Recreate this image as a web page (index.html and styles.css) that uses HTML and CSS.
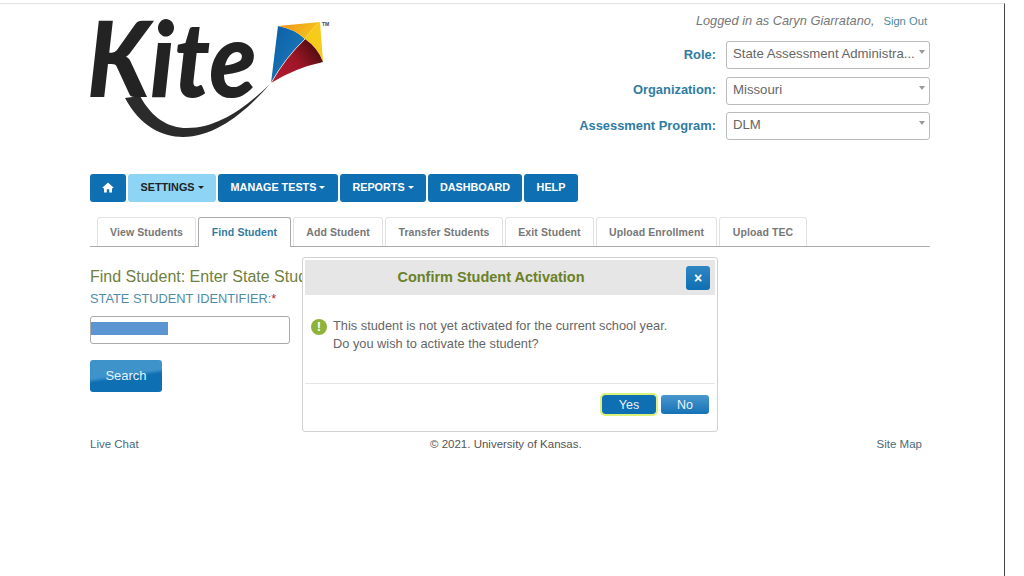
FILE: index.html
```html
<!DOCTYPE html>
<html lang="en">
<head>
    <meta charset="UTF-8">
    <title>Find Student</title>
    <link rel="stylesheet" href="styles.css">
</head>
<body>
    <div class="screen">
        <div class="page">
            <header class="header">
                <div class="logo">
                    <svg width="245" height="125" viewBox="0 0 245 125" role="img" aria-label="Kite logo">
                        <defs>
                            <linearGradient id="kite-red" x1="0" y1="1" x2="1" y2="0.4">
                                <stop offset="0" stop-color="#b81c30"/>
                                <stop offset="0.6" stop-color="#9c1526"/>
                                <stop offset="1" stop-color="#4f0d10"/>
                            </linearGradient>
                            <linearGradient id="kite-sun" x1="0" y1="0" x2="1" y2="0.3">
                                <stop offset="0" stop-color="#ee8f1c"/>
                                <stop offset="1" stop-color="#f7c41a"/>
                            </linearGradient>
                            <linearGradient id="kite-blue" x1="0" y1="0" x2="1" y2="1">
                                <stop offset="0" stop-color="#0a5ea6"/>
                                <stop offset="1" stop-color="#2080bd"/>
                            </linearGradient>
                        </defs>
                        <path class="swoosh" d="M35 80C50 108 72 119 93 119C125 119 155 95 180 66C155 90 128 110 97 110C78 110 62 100 50 78Z"/>
                        <path d="M188 8Q205 11 215 21Q195 40 181 65Z" fill="url(#kite-blue)"/>
                        <path d="M188 8L230 4Q222 10 215 21Q205 11 188 8Z" fill="url(#kite-sun)"/>
                        <path d="M230 4L233 44Q228 30 215 21Q222 10 230 4Z" fill="#f6cb1a"/>
                        <path d="M181 65Q195 40 215 21Q228 30 233 44Q205 50 181 65Z" fill="url(#kite-red)"/>
                        <path d="M181 65Q195 40 215 21" fill="none" stroke="#ececec" stroke-width="0.8"/>
                    </svg>
                    <span class="logo-word">Kite</span>
                    <span class="logo-tm">TM</span>
                </div>
                <div class="account">
                    <div class="login-line"><em>Logged in as Caryn Giarratano,</em><a class="sign-out" href="#">Sign Out</a></div>
                    <div class="field-row">
                        <label class="field-label">Role:</label>
                        <div class="select"><span>State Assessment Administra...</span><i class="caret"></i></div>
                    </div>
                    <div class="field-row">
                        <label class="field-label">Organization:</label>
                        <div class="select"><span>Missouri</span><i class="caret"></i></div>
                    </div>
                    <div class="field-row">
                        <label class="field-label">Assessment Program:</label>
                        <div class="select"><span>DLM</span><i class="caret"></i></div>
                    </div>
                </div>
            </header>

            <nav class="main-nav">
                <a class="nav-btn home" href="#">
                    <svg width="12" height="11" viewBox="0 0 12 11"><path d="M6 0.5L0.5 5.6L1.3 6.4L2 5.8V10.5H4.8V7.2H7.2V10.5H10V5.8L10.7 6.4L11.5 5.6Z" fill="#fff"/></svg>
                </a>
                <a class="nav-btn current drop" href="#">SETTINGS</a>
                <a class="nav-btn drop manage" href="#">MANAGE TESTS</a>
                <a class="nav-btn drop reports" href="#">REPORTS</a>
                <a class="nav-btn dashboard" href="#">DASHBOARD</a>
                <a class="nav-btn help" href="#">HELP</a>
            </nav>

            <ul class="tabs">
                <li class="tab tab-view">View Students</li>
                <li class="tab tab-find active">Find Student</li>
                <li class="tab tab-add">Add Student</li>
                <li class="tab tab-transfer">Transfer Students</li>
                <li class="tab tab-exit">Exit Student</li>
                <li class="tab tab-enroll">Upload Enrollment</li>
                <li class="tab tab-tec">Upload TEC</li>
            </ul>

            <section class="search-form">
                <h2 class="form-title">Find Student: Enter State Student Identifier</h2>
                <label class="form-label">STATE STUDENT IDENTIFIER:<span class="req">*</span></label>
                <div class="text-input"><span class="redacted"></span></div>
                <button class="search-btn">Search</button>
            </section>

            <footer class="footer">
                <a href="#">Live Chat</a>
                <span class="copy">&copy; 2021. University of Kansas.</span>
                <a class="site-map" href="#">Site Map</a>
            </footer>
        </div>

        <div class="modal">
            <div class="modal-head">
                <h3>Confirm Student Activation</h3>
                <button class="modal-close">&times;</button>
            </div>
            <div class="modal-body">
                <span class="alert-icon">!</span>
                <p>This student is not yet activated for the current school year.<br>Do you wish to activate the student?</p>
            </div>
            <div class="modal-foot">
                <button class="modal-btn yes">Yes</button>
                <button class="modal-btn no">No</button>
            </div>
        </div>
    </div>
</body>
</html>
```

FILE: styles.css
```css
html, body {
    margin: 0;
    height: 100%;
    background-color: #fff;
    font-family: "Liberation Sans", Arial, sans-serif;
    overflow: hidden;
}
a {
    text-decoration: none;
}
.screen {
    position: relative;
    box-sizing: border-box;
    width: 1005px;
    height: 573px;
    margin: 3px 0 0 0;
    border-top: 1px solid #e2e2e2;
    border-right: 1px solid #444;
}
.page {
    width: 840px;
    margin-left: 90px;
}

/* header */
.header {
    display: flex;
    justify-content: space-between;
    height: 170px;
}
.logo {
    position: relative;
    width: 245px;
    height: 125px;
    margin-top: 14px;
}
.logo-word {
    position: absolute;
    left: -3px;
    top: 0;
    font-family: Lato, sans-serif;
    font-style: italic;
    font-weight: 900;
    font-size: 104px;
    line-height: 78px;
    color: #232323;
    transform: scaleX(0.93);
    transform-origin: left center;
}
.logo-tm {
    position: absolute;
    left: 232px;
    top: 3px;
    font-size: 5px;
    font-weight: bold;
    color: #444;
}
.swoosh {
    fill: #2b2b2b;
}
.account {
    display: flex;
    flex-direction: column;
    align-items: flex-end;
}
.login-line {
    height: 28px;
    margin-top: 9px;
    padding-right: 3px;
    font-size: 12.8px;
    color: #777;
}
.sign-out {
    margin-left: 9px;
    font-size: 11.2px;
    color: #4a8a9c;
}
.field-row {
    display: flex;
    align-items: center;
    margin-bottom: 7.5px;
}
.field-label {
    margin-right: 10px;
    padding-bottom: 2px;
    font-size: 12.9px;
    font-weight: bold;
    color: #2f7ca3;
}
.select {
    position: relative;
    box-sizing: border-box;
    width: 204px;
    height: 28px;
    padding: 4px 6px;
    border: 1px solid #bbb;
    border-radius: 3px;
    font-size: 13.2px;
    color: #666;
}
.caret {
    position: absolute;
    top: 8px;
    right: 4px;
    border-left: 3px solid transparent;
    border-right: 3px solid transparent;
    border-top: 4px solid #999;
}

/* main nav */
.main-nav {
    display: flex;
    gap: 2px;
    height: 28px;
}
.nav-btn {
    box-sizing: border-box;
    display: flex;
    align-items: center;
    justify-content: center;
    padding-bottom: 2px;
    background-color: #0f6fb3;
    border-radius: 3px;
    font-size: 10.8px;
    font-weight: bold;
    color: #fff;
}
.home { width: 36px; }
.current {
    width: 88px;
    background-color: #8ed5f5;
    color: #222;
}
.manage { width: 120px; }
.reports { width: 86px; }
.dashboard { width: 94px; }
.help { width: 54px; }
.drop::after {
    content: "";
    margin-left: 3px;
    border-left: 3px solid transparent;
    border-right: 3px solid transparent;
    border-top: 3px solid currentColor;
}

/* tabs */
.tabs {
    display: flex;
    gap: 2px;
    height: 29px;
    margin: 15px 0 0;
    padding: 0 0 0 7px;
    border-bottom: 1px solid #aaa;
    list-style: none;
}
.tab {
    box-sizing: border-box;
    height: 29px;
    padding-top: 8px;
    border: 1px solid #e2e2e2;
    border-bottom: none;
    border-radius: 3px 3px 0 0;
    text-align: center;
    font-size: 10.5px;
    font-weight: bold;
    letter-spacing: 0.1px;
    color: #777;
}
.tab-view { width: 99px; }
.tab-find { width: 93px; }
.tab-add { width: 90px; }
.tab-transfer { width: 118px; }
.tab-exit { width: 89px; }
.tab-enroll { width: 121px; }
.tab-tec { width: 88px; }
.tab.active {
    height: 30px;
    border-color: #aaa;
    background-color: #fff;
    color: #2f7ca3;
}

/* form */
.search-form {
    padding-top: 21px;
}
.form-title {
    margin: 0;
    font-size: 16px;
    font-weight: normal;
    line-height: 18px;
    color: #6f8040;
    white-space: nowrap;
}
.form-label {
    display: block;
    margin-top: 5px;
    font-size: 12.8px;
    line-height: 16px;
    color: #4f8ca8;
}
.req {
    color: #b03030;
}
.text-input {
    box-sizing: border-box;
    width: 200px;
    height: 28px;
    margin-top: 9px;
    padding-top: 5px;
    border: 1px solid #aaa;
    border-radius: 3px;
}
.redacted {
    display: block;
    width: 77px;
    height: 13px;
    background-color: #5b96d2;
}
.search-btn {
    display: block;
    width: 72px;
    height: 32px;
    margin-top: 16px;
    padding: 0 0 2px;
    border: none;
    border-radius: 3px;
    background: linear-gradient(172deg, #3e93cb 0 45%, #0f6fb3 55% 100%);
    font-family: inherit;
    font-size: 13px;
    color: #e6f3fa;
}

/* footer */
.footer {
    position: relative;
    display: flex;
    justify-content: space-between;
    margin-top: 46px;
    padding-right: 8px;
    font-size: 11.5px;
    color: #555;
}
.footer a {
    color: #4a6a7a;
}
.copy {
    position: absolute;
    left: 340px;
}

/* dialog */
.modal {
    position: absolute;
    left: 302px;
    top: 253px;
    box-sizing: border-box;
    width: 416px;
    height: 175px;
    padding: 2px;
    border: 1px solid #d0d0d0;
    border-radius: 3px;
    background-color: #fff;
    display: flex;
    flex-direction: column;
}
.modal-head {
    position: relative;
    box-sizing: border-box;
    height: 35px;
    padding-bottom: 2px;
    background-color: #e6e6e6;
    display: flex;
    align-items: center;
    justify-content: center;
}
.modal-head h3 {
    margin: 0 38px 0 0;
    font-size: 14.5px;
    font-weight: bold;
    color: #6a8128;
}
.modal-close {
    position: absolute;
    top: 6px;
    right: 5px;
    width: 24px;
    height: 24px;
    padding: 0;
    border: none;
    border-radius: 3px;
    background: linear-gradient(#2f86c2, #0f6fb3);
    font-family: inherit;
    font-size: 14px;
    font-weight: bold;
    color: #fff;
}
.modal-body {
    display: flex;
    gap: 6px;
    height: 66px;
    padding: 22px 0 0 6px;
    border-bottom: 1px solid #e6e6e6;
    flex: none;
}
.modal-body p {
    margin: 0;
    font-size: 12.8px;
    line-height: 18px;
    color: #666;
}
.alert-icon {
    flex: none;
    width: 16px;
    height: 16px;
    margin-top: 2px;
    border-radius: 50%;
    background-color: #8db33a;
    text-align: center;
    font-size: 13px;
    font-weight: bold;
    line-height: 16px;
    color: #fff;
}
.modal-foot {
    display: flex;
    justify-content: flex-end;
    gap: 5px;
    padding: 11px 6px 0 0;
}
.modal-btn {
    height: 19px;
    padding: 0;
    border: none;
    border-radius: 3px;
    font-family: inherit;
    font-size: 12.5px;
    color: #eaf4fa;
}
.yes {
    width: 54px;
    background-color: #0f6fb3;
    outline: 2px solid #dcf27a;
}
.no {
    width: 48px;
    background: linear-gradient(#4a97cc, #1572b5);
}
```
